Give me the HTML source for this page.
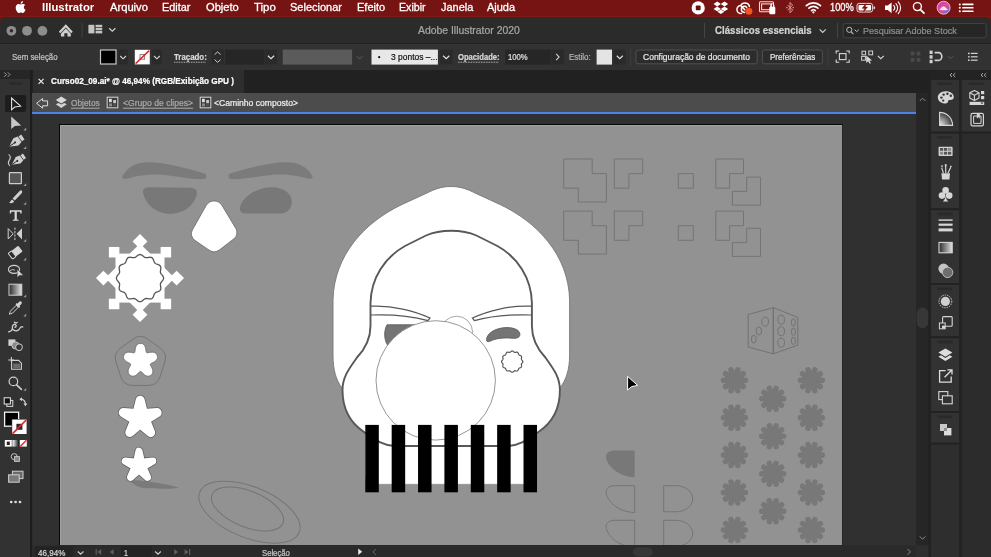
<!DOCTYPE html>
<html><head><meta charset="utf-8"><title>Adobe Illustrator 2020</title>
<style>
html,body{margin:0;padding:0;}
body{width:991px;height:557px;overflow:hidden;position:relative;background:#2b2b2b;font-family:"Liberation Sans",sans-serif;}
.a{position:absolute;}
.t{position:absolute;white-space:nowrap;line-height:1;transform-origin:0 100%;font-family:"Liberation Sans",sans-serif;}
svg{position:absolute;overflow:visible;}
#menubar{left:0;top:0;width:991px;height:17px;background:#761413;}
#menubar:after{content:"";position:absolute;left:0;top:16px;width:991px;height:1px;background:#7e1a14;}
#titlebar{left:0;top:17px;width:991px;height:26px;background:#2b2b2b;}
#ctrlbar{left:0;top:43px;width:991px;height:27px;background:#323232;border-top:1px solid #222;box-sizing:border-box;}
#tabrow{left:0;top:70px;width:991px;height:23px;background:#212121;}
#tab{left:33px;top:70px;width:211px;height:23px;background:#2e2e2e;}
#crumb{left:32.4px;top:92.8px;width:883.7px;height:19px;background:#4c4c4c;}
#blue{left:32.3px;top:111.8px;width:883.7px;height:2.3px;background:#4a82ee;}
#canvas{left:33px;top:114px;width:883px;height:432px;background:#303030;}
#artboard{left:59.3px;top:124px;width:784px;height:421.9px;background:#929292;border:1px solid #050505;border-right-color:#262626;border-bottom-color:#262626;box-sizing:border-box;box-shadow:inset 1px 1px 0 #a2a2a2;}
#tools{left:0;top:70px;width:30.4px;height:487px;background:#323232;}
#toolshead{left:0;top:70px;width:31px;height:9px;background:#262626;}
#toolsedge{left:30.2px;top:70px;width:2.2px;height:487px;background:#1d1d1d;}
#vscroll{left:916px;top:93px;width:14px;height:464px;background:#262626;}
#status{left:33px;top:546px;width:897px;height:11px;background:#2a2a2a;}
#dock{left:930px;top:70px;width:61px;height:487px;background:#1f1f1f;}
.dcol{background:#323232;}
.dsep{background:#262626;height:1px;}
.grip{background:#2a2a2a;height:3px;border-radius:1px;}

#texts{position:absolute;left:0;top:0;width:991px;height:557px;filter:grayscale(1);}

</style></head>
<body>
<div class="a" id="menubar"></div>
<div class="a" id="titlebar"></div>
<div class="a" id="ctrlbar"></div>
<div class="a" id="tabrow"></div>
<div class="a" id="tab"></div>
<div class="a" id="crumb"></div>
<div class="a" id="blue"></div>
<div class="a" id="canvas"></div>
<div class="a" id="artboard"></div>
<svg id="art" width="991" height="557" viewBox="0 0 991 557" style="left:0;top:0;">
<defs><clipPath id="abclip"><rect x="60" y="125" width="782.3" height="420"/></clipPath></defs>
<g clip-path="url(#abclip)">
<path d="M122.4,176.5 C126,168 136,162.3 148,162.3 C165,162.3 190,169 204.5,173.6 C207.2,174.6 207,178.6 204,179.1 C195,180 180,176.8 160,174.6 C145,173.6 133,177 126,178.8 C123.5,179.2 121.8,178 122.4,176.5 Z" fill="#7b7b7b"/>
<path d="M122.4,176.5 C126,168 136,162.3 148,162.3 C165,162.3 190,169 204.5,173.6 C207.2,174.6 207,178.6 204,179.1 C195,180 180,176.8 160,174.6 C145,173.6 133,177 126,178.8 C123.5,179.2 121.8,178 122.4,176.5 Z" fill="#7b7b7b" transform="translate(434.9,0) scale(-1,1)"/>
<path d="M143,192 C142.6,188.5 146,187.2 150,187.2 L190,187.8 C195,187.9 197.6,190 196.8,194 C195,204 185,213.8 170,213.8 C155,213.8 144,202 143,192 Z" fill="#787878"/>
<path d="M240,208 C241,198 256,187.2 272,187.2 C284,187.2 292,194 291.8,202 C291.5,210 286,213.6 280,213.6 L247,213.6 C242,213.6 239.6,212 240,208 Z" fill="#787878"/>
<path d="M206.06,205.65 A9.2,9.2 0 0 1 221.95,205.41 L235.81,228.38 A8,8 0 0 1 233.84,238.86 L219.59,249.81 A9,9 0 0 1 209,250.08 L194.87,240.35 A8,8 0 0 1 192.44,229.83 Z" fill="#fff" stroke="#6a6a6a" stroke-width="0.8"/>
<rect x="115.5" y="253.6" width="49" height="49" fill="#fff"/>
<rect x="115.5" y="253.6" width="49" height="49" fill="#fff" transform="rotate(45 140 278.1)"/>
<rect x="-5.25" y="-5.25" width="10.5" height="10.5" fill="#fff" transform="translate(176.6,278.1) rotate(45)"/>
<rect x="-5.25" y="-5.25" width="10.5" height="10.5" fill="#fff" transform="translate(165.88,303.98) rotate(90)"/>
<rect x="-5.25" y="-5.25" width="10.5" height="10.5" fill="#fff" transform="translate(140,314.7) rotate(135)"/>
<rect x="-5.25" y="-5.25" width="10.5" height="10.5" fill="#fff" transform="translate(114.12,303.98) rotate(180)"/>
<rect x="-5.25" y="-5.25" width="10.5" height="10.5" fill="#fff" transform="translate(103.4,278.1) rotate(225)"/>
<rect x="-5.25" y="-5.25" width="10.5" height="10.5" fill="#fff" transform="translate(114.12,252.22) rotate(270)"/>
<rect x="-5.25" y="-5.25" width="10.5" height="10.5" fill="#fff" transform="translate(140,241.5) rotate(315)"/>
<rect x="-5.25" y="-5.25" width="10.5" height="10.5" fill="#fff" transform="translate(165.88,252.22) rotate(360)"/>
<path d="M163.6,278.1 L163.53,278.72 L163.34,279.32 L163.03,279.91 L162.65,280.48 L162.21,281.02 L161.76,281.55 L161.33,282.05 L160.96,282.56 L160.67,283.06 L160.48,283.59 L160.38,284.14 L160.38,284.72 L160.45,285.34 L160.57,285.99 L160.69,286.67 L160.8,287.36 L160.85,288.05 L160.82,288.71 L160.69,289.33 L160.44,289.9 L160.07,290.4 L159.6,290.83 L159.04,291.19 L158.42,291.48 L157.77,291.74 L157.12,291.96 L156.5,292.19 L155.92,292.44 L155.42,292.73 L154.99,293.09 L154.63,293.52 L154.34,294.02 L154.09,294.6 L153.86,295.22 L153.64,295.87 L153.38,296.52 L153.09,297.14 L152.73,297.7 L152.3,298.17 L151.8,298.54 L151.23,298.79 L150.61,298.92 L149.95,298.95 L149.26,298.9 L148.57,298.79 L147.89,298.67 L147.24,298.55 L146.62,298.48 L146.04,298.48 L145.49,298.58 L144.96,298.77 L144.46,299.06 L143.95,299.43 L143.45,299.86 L142.92,300.31 L142.38,300.75 L141.81,301.13 L141.22,301.44 L140.62,301.63 L140,301.7 L139.38,301.63 L138.78,301.44 L138.19,301.13 L137.62,300.75 L137.08,300.31 L136.55,299.86 L136.05,299.43 L135.54,299.06 L135.04,298.77 L134.51,298.58 L133.96,298.48 L133.38,298.48 L132.76,298.55 L132.11,298.67 L131.43,298.79 L130.74,298.9 L130.05,298.95 L129.39,298.92 L128.77,298.79 L128.2,298.54 L127.7,298.17 L127.27,297.7 L126.91,297.14 L126.62,296.52 L126.36,295.87 L126.14,295.22 L125.91,294.6 L125.66,294.02 L125.37,293.52 L125.01,293.09 L124.58,292.73 L124.08,292.44 L123.5,292.19 L122.88,291.96 L122.23,291.74 L121.58,291.48 L120.96,291.19 L120.4,290.83 L119.93,290.4 L119.56,289.9 L119.31,289.33 L119.18,288.71 L119.15,288.05 L119.2,287.36 L119.31,286.67 L119.43,285.99 L119.55,285.34 L119.62,284.72 L119.62,284.14 L119.52,283.59 L119.33,283.06 L119.04,282.56 L118.67,282.05 L118.24,281.55 L117.79,281.02 L117.35,280.48 L116.97,279.91 L116.66,279.32 L116.47,278.72 L116.4,278.1 L116.47,277.48 L116.66,276.88 L116.97,276.29 L117.35,275.72 L117.79,275.18 L118.24,274.65 L118.67,274.15 L119.04,273.64 L119.33,273.14 L119.52,272.61 L119.62,272.06 L119.62,271.48 L119.55,270.86 L119.43,270.21 L119.31,269.53 L119.2,268.84 L119.15,268.15 L119.18,267.49 L119.31,266.87 L119.56,266.3 L119.93,265.8 L120.4,265.37 L120.96,265.01 L121.58,264.72 L122.23,264.46 L122.88,264.24 L123.5,264.01 L124.08,263.76 L124.58,263.47 L125.01,263.11 L125.37,262.68 L125.66,262.18 L125.91,261.6 L126.14,260.98 L126.36,260.33 L126.62,259.68 L126.91,259.06 L127.27,258.5 L127.7,258.03 L128.2,257.66 L128.77,257.41 L129.39,257.28 L130.05,257.25 L130.74,257.3 L131.43,257.41 L132.11,257.53 L132.76,257.65 L133.38,257.72 L133.96,257.72 L134.51,257.62 L135.04,257.43 L135.54,257.14 L136.05,256.77 L136.55,256.34 L137.08,255.89 L137.62,255.45 L138.19,255.07 L138.78,254.76 L139.38,254.57 L140,254.5 L140.62,254.57 L141.22,254.76 L141.81,255.07 L142.38,255.45 L142.92,255.89 L143.45,256.34 L143.95,256.77 L144.46,257.14 L144.96,257.43 L145.49,257.62 L146.04,257.72 L146.62,257.72 L147.24,257.65 L147.89,257.53 L148.57,257.41 L149.26,257.3 L149.95,257.25 L150.61,257.28 L151.23,257.41 L151.8,257.66 L152.3,258.03 L152.73,258.5 L153.09,259.06 L153.38,259.68 L153.64,260.33 L153.86,260.98 L154.09,261.6 L154.34,262.18 L154.63,262.68 L154.99,263.11 L155.42,263.47 L155.92,263.76 L156.5,264.01 L157.12,264.24 L157.77,264.46 L158.42,264.72 L159.04,265.01 L159.6,265.37 L160.07,265.8 L160.44,266.3 L160.69,266.87 L160.82,267.49 L160.85,268.15 L160.8,268.84 L160.69,269.53 L160.57,270.21 L160.45,270.86 L160.38,271.48 L160.38,272.06 L160.48,272.61 L160.67,273.14 L160.96,273.64 L161.33,274.15 L161.76,274.65 L162.21,275.18 L162.65,275.72 L163.03,276.29 L163.34,276.88 L163.53,277.48Z" fill="#fff" stroke="#555" stroke-width="1.3"/>
<path d="M133.12,338.99 Q140.4,333.7 147.68,338.99 L160.32,348.17 Q167.6,353.46 164.82,362.02 L159.99,376.88 Q157.21,385.44 148.21,385.44 L132.59,385.44 Q123.59,385.44 120.81,376.88 L115.98,362.02 Q113.2,353.46 120.48,348.17 Z" fill="none" stroke="#757575" stroke-width="1"/>
<polygon points="140.5,343.4 140.81,343.41 141.11,343.44 141.42,343.48 141.72,343.54 142.02,343.63 142.32,343.73 142.61,343.85 142.89,344 143.17,344.16 143.43,344.36 143.69,344.57 143.94,344.81 144.18,345.08 144.4,345.36 144.61,345.68 144.8,346.01 144.98,346.36 145.14,346.73 145.28,347.12 145.41,347.52 145.52,347.93 145.61,348.34 145.7,348.76 145.77,349.17 145.83,349.57 145.88,349.97 145.93,350.35 145.97,350.71 146.02,351.05 146.07,351.36 146.12,351.64 146.19,351.9 146.27,352.12 146.36,352.31 146.48,352.46 146.61,352.59 146.77,352.68 146.96,352.74 147.16,352.77 147.4,352.78 147.66,352.76 147.95,352.73 148.26,352.68 148.6,352.62 148.95,352.55 149.33,352.47 149.72,352.4 150.12,352.33 150.54,352.27 150.96,352.22 151.38,352.19 151.8,352.17 152.22,352.17 152.64,352.18 153.04,352.22 153.43,352.28 153.81,352.36 154.17,352.46 154.51,352.58 154.83,352.73 155.14,352.89 155.42,353.07 155.69,353.26 155.93,353.47 156.16,353.7 156.37,353.94 156.55,354.19 156.73,354.44 156.88,354.71 157.02,354.99 157.14,355.27 157.24,355.56 157.33,355.86 157.39,356.16 157.45,356.46 157.48,356.77 157.49,357.08 157.49,357.39 157.46,357.7 157.41,358.02 157.34,358.33 157.24,358.65 157.11,358.96 156.96,359.27 156.78,359.58 156.58,359.88 156.34,360.17 156.09,360.46 155.8,360.73 155.5,361 155.18,361.26 154.84,361.5 154.48,361.73 154.12,361.95 153.75,362.16 153.38,362.35 153.01,362.54 152.65,362.71 152.31,362.87 151.98,363.02 151.67,363.17 151.39,363.31 151.14,363.46 150.92,363.6 150.73,363.74 150.58,363.89 150.47,364.05 150.39,364.21 150.35,364.39 150.35,364.59 150.39,364.79 150.45,365.02 150.55,365.27 150.67,365.53 150.81,365.81 150.98,366.11 151.15,366.43 151.34,366.76 151.53,367.11 151.72,367.48 151.9,367.85 152.08,368.23 152.24,368.63 152.39,369.02 152.52,369.42 152.64,369.82 152.72,370.21 152.79,370.6 152.83,370.98 152.84,371.36 152.83,371.72 152.8,372.07 152.74,372.41 152.66,372.74 152.55,373.05 152.43,373.35 152.28,373.64 152.12,373.91 151.94,374.16 151.75,374.41 151.54,374.63 151.32,374.85 151.09,375.05 150.85,375.24 150.59,375.41 150.33,375.57 150.06,375.71 149.77,375.84 149.48,375.95 149.18,376.04 148.88,376.11 148.56,376.16 148.24,376.19 147.91,376.19 147.57,376.17 147.23,376.12 146.89,376.04 146.54,375.94 146.19,375.81 145.83,375.65 145.48,375.47 145.14,375.27 144.79,375.04 144.45,374.79 144.12,374.52 143.8,374.25 143.49,373.96 143.19,373.67 142.91,373.37 142.63,373.09 142.37,372.81 142.12,372.54 141.89,372.3 141.66,372.07 141.45,371.87 141.25,371.71 141.05,371.58 140.87,371.48 140.68,371.42 140.5,371.4 140.32,371.42 140.13,371.48 139.95,371.58 139.75,371.71 139.55,371.87 139.34,372.07 139.11,372.3 138.88,372.54 138.63,372.81 138.37,373.09 138.09,373.37 137.81,373.67 137.51,373.96 137.2,374.25 136.88,374.52 136.55,374.79 136.21,375.04 135.86,375.27 135.52,375.47 135.17,375.65 134.81,375.81 134.46,375.94 134.11,376.04 133.77,376.12 133.43,376.17 133.09,376.19 132.76,376.19 132.44,376.16 132.12,376.11 131.82,376.04 131.52,375.95 131.23,375.84 130.94,375.71 130.67,375.57 130.41,375.41 130.15,375.24 129.91,375.05 129.68,374.85 129.46,374.63 129.25,374.41 129.06,374.16 128.88,373.91 128.72,373.64 128.57,373.35 128.45,373.05 128.34,372.74 128.26,372.41 128.2,372.07 128.17,371.72 128.16,371.36 128.17,370.98 128.21,370.6 128.28,370.21 128.36,369.82 128.48,369.42 128.61,369.02 128.76,368.63 128.92,368.23 129.1,367.85 129.28,367.48 129.47,367.11 129.66,366.76 129.85,366.43 130.02,366.11 130.19,365.81 130.33,365.53 130.45,365.27 130.55,365.02 130.61,364.79 130.65,364.59 130.65,364.39 130.61,364.21 130.53,364.05 130.42,363.89 130.27,363.74 130.08,363.6 129.86,363.46 129.61,363.31 129.33,363.17 129.02,363.02 128.69,362.87 128.35,362.71 127.99,362.54 127.62,362.35 127.25,362.16 126.88,361.95 126.52,361.73 126.16,361.5 125.82,361.26 125.5,361 125.2,360.73 124.91,360.46 124.66,360.17 124.42,359.88 124.22,359.58 124.04,359.27 123.89,358.96 123.76,358.65 123.66,358.33 123.59,358.02 123.54,357.7 123.51,357.39 123.51,357.08 123.52,356.77 123.55,356.46 123.61,356.16 123.67,355.86 123.76,355.56 123.86,355.27 123.98,354.99 124.12,354.71 124.27,354.44 124.45,354.19 124.63,353.94 124.84,353.7 125.07,353.47 125.31,353.26 125.58,353.07 125.86,352.89 126.17,352.73 126.49,352.58 126.83,352.46 127.19,352.36 127.57,352.28 127.96,352.22 128.36,352.18 128.78,352.17 129.2,352.17 129.62,352.19 130.04,352.22 130.46,352.27 130.88,352.33 131.28,352.4 131.67,352.47 132.05,352.55 132.4,352.62 132.74,352.68 133.05,352.73 133.34,352.76 133.6,352.78 133.84,352.77 134.04,352.74 134.23,352.68 134.39,352.59 134.52,352.46 134.64,352.31 134.73,352.12 134.81,351.9 134.88,351.64 134.93,351.36 134.98,351.05 135.03,350.71 135.07,350.35 135.12,349.97 135.17,349.57 135.23,349.17 135.3,348.76 135.39,348.34 135.48,347.93 135.59,347.52 135.72,347.12 135.86,346.73 136.02,346.36 136.2,346.01 136.39,345.68 136.6,345.36 136.82,345.08 137.06,344.81 137.31,344.57 137.57,344.36 137.83,344.16 138.11,344 138.39,343.85 138.68,343.73 138.98,343.63 139.28,343.54 139.58,343.48 139.89,343.44 140.19,343.41" fill="#fff" stroke="#666" stroke-width="0.9"/>
<path d="M130,480.4 C142,479.6 165,484 179,487.6 C172,489.4 160,489 152,488 C146,489 140,487.6 136,485.4 C133,484 130.5,482 130,480.4Z" fill="#7a7a7a"/>
<polygon points="140.2,400.2 143.49,413.57 157.22,412.57 145.53,419.83 150.72,432.58 140.2,423.7 129.68,432.58 134.87,419.83 123.18,412.57 136.91,413.57" fill="#5e5e5e" stroke="#5e5e5e" stroke-width="10.5" stroke-linejoin="round"/>
<polygon points="140.2,400.2 143.49,413.57 157.22,412.57 145.53,419.83 150.72,432.58 140.2,423.7 129.68,432.58 134.87,419.83 123.18,412.57 136.91,413.57" fill="#fff" stroke="#fff" stroke-width="9" stroke-linejoin="round"/>
<polygon points="139,451.2 141.41,462.28 152.7,461.15 142.9,466.87 147.46,477.25 139,469.7 130.54,477.25 135.1,466.87 125.3,461.15 136.59,462.28" fill="#5e5e5e" stroke="#5e5e5e" stroke-width="8.7" stroke-linejoin="round"/>
<polygon points="139,451.2 141.41,462.28 152.7,461.15 142.9,466.87 147.46,477.25 139,469.7 130.54,477.25 135.1,466.87 125.3,461.15 136.59,462.28" fill="#fff" stroke="#fff" stroke-width="7.2" stroke-linejoin="round"/>
<ellipse cx="249.5" cy="512.2" rx="53.6" ry="25.5" transform="rotate(22 249.5 512.2)" fill="none" stroke="#757575" stroke-width="1"/>
<ellipse cx="247.5" cy="509" rx="38.2" ry="18" transform="rotate(22 247.5 509)" fill="none" stroke="#757575" stroke-width="1"/>
<path d="M451,186.5 C441,186.5 434,189.5 427,193 L402,204.5 C365,222 334,255 333,300 L333,355 C333,370 336,380 342,388 L560,388 C566,380 569.6,370 569.6,355 L569.6,300 C568.6,255 537,222 500,204.5 L475,193 C468,189.5 461,186.5 451,186.5 Z" fill="#fff" stroke="#777" stroke-width="0.9"/>
<rect x="365" y="400" width="172" height="84.3" rx="9" fill="#fff" stroke="#888" stroke-width="0.6"/>
<path d="M451.2,230.8 C441,230.8 434,232 426,235.5 L405,246 C385,257 371,278 370.5,303 L370.5,326 C370.5,340 365,349 357,357.5 C348,370 342.5,378 342.5,390 C342.5,410 352,424 364,432 C374,439 382,445.5 395,446 L507.4,446 C520.4,445.5 528.4,439 538.4,432 C550.4,424 559.9,410 559.9,390 C559.9,378 554.4,370 545.4,357.5 C537.4,349 531.9,340 531.9,326 L531.9,303 C531.4,278 517.4,257 497.4,246 L476.4,235.5 C468.4,232 461.4,230.8 451.2,230.8 Z" fill="#fff" stroke="#585858" stroke-width="1.9"/>
<path d="M371,306.2 C392,305 415,311 430,318 L428,320.6 C410,315.6 392,314.2 371,315" fill="none" stroke="#585858" stroke-width="1.25"/>
<path d="M371,306.2 C392,305 415,311 430,318 L428,320.6 C410,315.6 392,314.2 371,315" fill="none" stroke="#585858" stroke-width="1.25" transform="translate(902.4,0) scale(-1,1)"/>
<path d="M387,324.8 L416,324.8 L416,346 L388,346 C383.5,339 384,330.5 387,324.8 Z" fill="#747474" stroke="#5e5e5e" stroke-width="0.9"/>
<path d="M486.5,339.5 C487,333 496,327.6 507,327.6 C514,327.6 520,330 519.9,334.5 C519.8,338 516,338.6 512,338.2 C504,337.4 496,338.2 490,341.2 C487.5,342.2 486.3,341.5 486.5,339.5 Z" fill="#747474" stroke="#5e5e5e" stroke-width="0.9"/>
<circle cx="456.6" cy="332.2" r="16" fill="#fff" stroke="#909090" stroke-width="0.8"/>
<circle cx="435.7" cy="380.4" r="59.7" fill="#fff" stroke="#8a8a8a" stroke-width="0.9"/>
<path d="M522.85,361.6 L522.82,361.88 L522.73,362.15 L522.59,362.42 L522.41,362.67 L522.21,362.92 L522.01,363.15 L521.81,363.38 L521.64,363.61 L521.51,363.84 L521.42,364.07 L521.38,364.32 L521.38,364.58 L521.42,364.86 L521.47,365.16 L521.53,365.47 L521.58,365.78 L521.61,366.09 L521.6,366.39 L521.54,366.67 L521.42,366.93 L521.26,367.15 L521.04,367.34 L520.79,367.5 L520.51,367.64 L520.21,367.75 L519.92,367.85 L519.63,367.95 L519.38,368.06 L519.15,368.19 L518.95,368.35 L518.79,368.55 L518.66,368.78 L518.55,369.03 L518.45,369.32 L518.35,369.61 L518.24,369.91 L518.1,370.19 L517.94,370.44 L517.75,370.66 L517.53,370.82 L517.27,370.94 L516.99,371 L516.69,371.01 L516.38,370.98 L516.07,370.93 L515.76,370.87 L515.46,370.82 L515.18,370.78 L514.92,370.78 L514.67,370.82 L514.44,370.91 L514.21,371.04 L513.98,371.21 L513.75,371.41 L513.52,371.61 L513.27,371.81 L513.02,371.99 L512.75,372.13 L512.48,372.22 L512.2,372.25 L511.92,372.22 L511.65,372.13 L511.38,371.99 L511.13,371.81 L510.88,371.61 L510.65,371.41 L510.42,371.21 L510.19,371.04 L509.96,370.91 L509.73,370.82 L509.48,370.78 L509.22,370.78 L508.94,370.82 L508.64,370.87 L508.33,370.93 L508.02,370.98 L507.71,371.01 L507.41,371 L507.13,370.94 L506.88,370.82 L506.65,370.66 L506.46,370.44 L506.3,370.19 L506.16,369.91 L506.05,369.61 L505.95,369.32 L505.85,369.03 L505.74,368.78 L505.61,368.55 L505.45,368.35 L505.25,368.19 L505.02,368.06 L504.77,367.95 L504.48,367.85 L504.19,367.75 L503.89,367.64 L503.61,367.5 L503.36,367.34 L503.14,367.15 L502.98,366.93 L502.86,366.67 L502.8,366.39 L502.79,366.09 L502.82,365.78 L502.87,365.47 L502.93,365.16 L502.98,364.86 L503.02,364.58 L503.02,364.32 L502.98,364.07 L502.89,363.84 L502.76,363.61 L502.59,363.38 L502.39,363.15 L502.19,362.92 L501.99,362.67 L501.81,362.42 L501.67,362.15 L501.58,361.88 L501.55,361.6 L501.58,361.32 L501.67,361.05 L501.81,360.78 L501.99,360.53 L502.19,360.28 L502.39,360.05 L502.59,359.82 L502.76,359.59 L502.89,359.36 L502.98,359.13 L503.02,358.88 L503.02,358.62 L502.98,358.34 L502.93,358.04 L502.87,357.73 L502.82,357.42 L502.79,357.11 L502.8,356.81 L502.86,356.53 L502.98,356.28 L503.14,356.05 L503.36,355.86 L503.61,355.7 L503.89,355.56 L504.19,355.45 L504.48,355.35 L504.77,355.25 L505.02,355.14 L505.25,355.01 L505.45,354.85 L505.61,354.65 L505.74,354.42 L505.85,354.17 L505.95,353.88 L506.05,353.59 L506.16,353.29 L506.3,353.01 L506.46,352.76 L506.65,352.54 L506.88,352.38 L507.13,352.26 L507.41,352.2 L507.71,352.19 L508.02,352.22 L508.33,352.27 L508.64,352.33 L508.94,352.38 L509.22,352.42 L509.48,352.42 L509.73,352.38 L509.96,352.29 L510.19,352.16 L510.42,351.99 L510.65,351.79 L510.88,351.59 L511.13,351.39 L511.38,351.21 L511.65,351.07 L511.92,350.98 L512.2,350.95 L512.48,350.98 L512.75,351.07 L513.02,351.21 L513.27,351.39 L513.52,351.59 L513.75,351.79 L513.98,351.99 L514.21,352.16 L514.44,352.29 L514.67,352.38 L514.92,352.42 L515.18,352.42 L515.46,352.38 L515.76,352.33 L516.07,352.27 L516.38,352.22 L516.69,352.19 L516.99,352.2 L517.27,352.26 L517.53,352.38 L517.75,352.54 L517.94,352.76 L518.1,353.01 L518.24,353.29 L518.35,353.59 L518.45,353.88 L518.55,354.17 L518.66,354.42 L518.79,354.65 L518.95,354.85 L519.15,355.01 L519.38,355.14 L519.63,355.25 L519.92,355.35 L520.21,355.45 L520.51,355.56 L520.79,355.7 L521.04,355.86 L521.26,356.05 L521.42,356.28 L521.54,356.53 L521.6,356.81 L521.61,357.11 L521.58,357.42 L521.53,357.73 L521.47,358.04 L521.42,358.34 L521.38,358.62 L521.38,358.88 L521.42,359.13 L521.51,359.36 L521.64,359.59 L521.81,359.82 L522.01,360.05 L522.21,360.28 L522.41,360.53 L522.59,360.78 L522.73,361.05 L522.82,361.32Z" fill="#fff" stroke="#585858" stroke-width="1.2"/>
<rect x="365.3" y="424.9" width="13.5" height="67.4" fill="#000"/>
<rect x="391.67" y="424.9" width="13.5" height="67.4" fill="#000"/>
<rect x="418.04" y="424.9" width="13.5" height="67.4" fill="#000"/>
<rect x="444.41" y="424.9" width="13.5" height="67.4" fill="#000"/>
<rect x="470.78" y="424.9" width="13.5" height="67.4" fill="#000"/>
<rect x="497.15" y="424.9" width="13.5" height="67.4" fill="#000"/>
<rect x="523.52" y="424.9" width="13.5" height="67.4" fill="#000"/>
<polygon points="563.7,159 592.2,159 592.2,173.6 606.4,173.6 606.4,202 578.3,202 578.3,188.2 563.7,188.2" fill="none" stroke="#757575" stroke-width="1"/>
<polygon points="614.3,159 642.7,159 642.7,173.6 628.9,173.6 628.9,188.2 614.3,188.2" fill="none" stroke="#757575" stroke-width="1"/>
<polygon points="678.3,173.6 693.3,173.6 693.3,188.2 678.3,188.2" fill="none" stroke="#757575" stroke-width="1"/>
<polygon points="715.8,159 743.5,159 743.5,173.6 729.6,173.6 729.6,188.2 715.8,188.2" fill="none" stroke="#757575" stroke-width="1"/>
<polygon points="563.7,211.1 592.2,211.1 592.2,225.7 606.4,225.7 606.4,254.1 578.3,254.1 578.3,240.3 563.7,240.3" fill="none" stroke="#757575" stroke-width="1"/>
<polygon points="614.3,211.1 642.7,211.1 642.7,225.7 628.9,225.7 628.9,240.3 614.3,240.3" fill="none" stroke="#757575" stroke-width="1"/>
<polygon points="678.3,225.7 693.3,225.7 693.3,240.3 678.3,240.3" fill="none" stroke="#757575" stroke-width="1"/>
<polygon points="715.8,211.1 743.5,211.1 743.5,225.7 729.6,225.7 729.6,240.3 715.8,240.3" fill="none" stroke="#757575" stroke-width="1"/>
<polygon points="732.4,205.2 760.5,205.2 760.5,177.1 746.7,177.1 746.7,191.4 732.4,191.4" fill="none" stroke="#757575" stroke-width="1"/>
<polygon points="732.4,256.4 760.5,256.4 760.5,228.3 746.7,228.3 746.7,242.6 732.4,242.6" fill="none" stroke="#757575" stroke-width="1"/>
<g fill="none" stroke="#727272" stroke-width="1">
<polygon points="748.2,314.5 773.3,307.6 773.3,353.8 748.2,347.1"/>
<polygon points="773.3,307.6 797.8,317.4 797.8,345.2 773.3,353.8"/>
<ellipse cx="765.1" cy="321.6" rx="3.4" ry="4.5"/>
<ellipse cx="758.9" cy="331" rx="2.7" ry="4"/>
<ellipse cx="753.8" cy="339.2" rx="2.4" ry="3.9"/>
<ellipse cx="781.2" cy="319.7" rx="3.3" ry="4.5"/>
<ellipse cx="781.2" cy="331.2" rx="3.3" ry="4.5"/>
<ellipse cx="781.2" cy="342.7" rx="3.3" ry="4.5"/>
<ellipse cx="793.4" cy="322.4" rx="2" ry="3.7"/>
<ellipse cx="793.4" cy="331.7" rx="2" ry="3.7"/>
<ellipse cx="793.4" cy="340.8" rx="2" ry="3.7"/>
</g>
<path d="M734.4,380.2 L745.3,380.2 M734.4,380.2 L743.22,386.61 M734.4,380.2 L737.77,390.57 M734.4,380.2 L731.03,390.57 M734.4,380.2 L725.58,386.61 M734.4,380.2 L723.5,380.2 M734.4,380.2 L725.58,373.79 M734.4,380.2 L731.03,369.83 M734.4,380.2 L737.77,369.83 M734.4,380.2 L743.22,373.79 " stroke="#787878" stroke-width="5.6" stroke-linecap="round" fill="none"/>
<circle cx="734.4" cy="380.2" r="9.4" fill="#787878"/>
<path d="M811.4,380.2 L822.3,380.2 M811.4,380.2 L820.22,386.61 M811.4,380.2 L814.77,390.57 M811.4,380.2 L808.03,390.57 M811.4,380.2 L802.58,386.61 M811.4,380.2 L800.5,380.2 M811.4,380.2 L802.58,373.79 M811.4,380.2 L808.03,369.83 M811.4,380.2 L814.77,369.83 M811.4,380.2 L820.22,373.79 " stroke="#787878" stroke-width="5.6" stroke-linecap="round" fill="none"/>
<circle cx="811.4" cy="380.2" r="9.4" fill="#787878"/>
<path d="M734.4,417.65 L745.3,417.65 M734.4,417.65 L743.22,424.06 M734.4,417.65 L737.77,428.02 M734.4,417.65 L731.03,428.02 M734.4,417.65 L725.58,424.06 M734.4,417.65 L723.5,417.65 M734.4,417.65 L725.58,411.24 M734.4,417.65 L731.03,407.28 M734.4,417.65 L737.77,407.28 M734.4,417.65 L743.22,411.24 " stroke="#787878" stroke-width="5.6" stroke-linecap="round" fill="none"/>
<circle cx="734.4" cy="417.65" r="9.4" fill="#787878"/>
<path d="M811.4,417.65 L822.3,417.65 M811.4,417.65 L820.22,424.06 M811.4,417.65 L814.77,428.02 M811.4,417.65 L808.03,428.02 M811.4,417.65 L802.58,424.06 M811.4,417.65 L800.5,417.65 M811.4,417.65 L802.58,411.24 M811.4,417.65 L808.03,407.28 M811.4,417.65 L814.77,407.28 M811.4,417.65 L820.22,411.24 " stroke="#787878" stroke-width="5.6" stroke-linecap="round" fill="none"/>
<circle cx="811.4" cy="417.65" r="9.4" fill="#787878"/>
<path d="M734.4,455.1 L745.3,455.1 M734.4,455.1 L743.22,461.51 M734.4,455.1 L737.77,465.47 M734.4,455.1 L731.03,465.47 M734.4,455.1 L725.58,461.51 M734.4,455.1 L723.5,455.1 M734.4,455.1 L725.58,448.69 M734.4,455.1 L731.03,444.73 M734.4,455.1 L737.77,444.73 M734.4,455.1 L743.22,448.69 " stroke="#787878" stroke-width="5.6" stroke-linecap="round" fill="none"/>
<circle cx="734.4" cy="455.1" r="9.4" fill="#787878"/>
<path d="M811.4,455.1 L822.3,455.1 M811.4,455.1 L820.22,461.51 M811.4,455.1 L814.77,465.47 M811.4,455.1 L808.03,465.47 M811.4,455.1 L802.58,461.51 M811.4,455.1 L800.5,455.1 M811.4,455.1 L802.58,448.69 M811.4,455.1 L808.03,444.73 M811.4,455.1 L814.77,444.73 M811.4,455.1 L820.22,448.69 " stroke="#787878" stroke-width="5.6" stroke-linecap="round" fill="none"/>
<circle cx="811.4" cy="455.1" r="9.4" fill="#787878"/>
<path d="M734.4,492.55 L745.3,492.55 M734.4,492.55 L743.22,498.96 M734.4,492.55 L737.77,502.92 M734.4,492.55 L731.03,502.92 M734.4,492.55 L725.58,498.96 M734.4,492.55 L723.5,492.55 M734.4,492.55 L725.58,486.14 M734.4,492.55 L731.03,482.18 M734.4,492.55 L737.77,482.18 M734.4,492.55 L743.22,486.14 " stroke="#787878" stroke-width="5.6" stroke-linecap="round" fill="none"/>
<circle cx="734.4" cy="492.55" r="9.4" fill="#787878"/>
<path d="M811.4,492.55 L822.3,492.55 M811.4,492.55 L820.22,498.96 M811.4,492.55 L814.77,502.92 M811.4,492.55 L808.03,502.92 M811.4,492.55 L802.58,498.96 M811.4,492.55 L800.5,492.55 M811.4,492.55 L802.58,486.14 M811.4,492.55 L808.03,482.18 M811.4,492.55 L814.77,482.18 M811.4,492.55 L820.22,486.14 " stroke="#787878" stroke-width="5.6" stroke-linecap="round" fill="none"/>
<circle cx="811.4" cy="492.55" r="9.4" fill="#787878"/>
<path d="M734.4,530 L745.3,530 M734.4,530 L743.22,536.41 M734.4,530 L737.77,540.37 M734.4,530 L731.03,540.37 M734.4,530 L725.58,536.41 M734.4,530 L723.5,530 M734.4,530 L725.58,523.59 M734.4,530 L731.03,519.63 M734.4,530 L737.77,519.63 M734.4,530 L743.22,523.59 " stroke="#787878" stroke-width="5.6" stroke-linecap="round" fill="none"/>
<circle cx="734.4" cy="530" r="9.4" fill="#787878"/>
<path d="M811.4,530 L822.3,530 M811.4,530 L820.22,536.41 M811.4,530 L814.77,540.37 M811.4,530 L808.03,540.37 M811.4,530 L802.58,536.41 M811.4,530 L800.5,530 M811.4,530 L802.58,523.59 M811.4,530 L808.03,519.63 M811.4,530 L814.77,519.63 M811.4,530 L820.22,523.59 " stroke="#787878" stroke-width="5.6" stroke-linecap="round" fill="none"/>
<circle cx="811.4" cy="530" r="9.4" fill="#787878"/>
<path d="M772.7,398.8 L783.6,398.8 M772.7,398.8 L781.52,405.21 M772.7,398.8 L776.07,409.17 M772.7,398.8 L769.33,409.17 M772.7,398.8 L763.88,405.21 M772.7,398.8 L761.8,398.8 M772.7,398.8 L763.88,392.39 M772.7,398.8 L769.33,388.43 M772.7,398.8 L776.07,388.43 M772.7,398.8 L781.52,392.39 " stroke="#787878" stroke-width="5.6" stroke-linecap="round" fill="none"/>
<circle cx="772.7" cy="398.8" r="9.4" fill="#787878"/>
<path d="M772.7,436.25 L783.6,436.25 M772.7,436.25 L781.52,442.66 M772.7,436.25 L776.07,446.62 M772.7,436.25 L769.33,446.62 M772.7,436.25 L763.88,442.66 M772.7,436.25 L761.8,436.25 M772.7,436.25 L763.88,429.84 M772.7,436.25 L769.33,425.88 M772.7,436.25 L776.07,425.88 M772.7,436.25 L781.52,429.84 " stroke="#787878" stroke-width="5.6" stroke-linecap="round" fill="none"/>
<circle cx="772.7" cy="436.25" r="9.4" fill="#787878"/>
<path d="M772.7,473.7 L783.6,473.7 M772.7,473.7 L781.52,480.11 M772.7,473.7 L776.07,484.07 M772.7,473.7 L769.33,484.07 M772.7,473.7 L763.88,480.11 M772.7,473.7 L761.8,473.7 M772.7,473.7 L763.88,467.29 M772.7,473.7 L769.33,463.33 M772.7,473.7 L776.07,463.33 M772.7,473.7 L781.52,467.29 " stroke="#787878" stroke-width="5.6" stroke-linecap="round" fill="none"/>
<circle cx="772.7" cy="473.7" r="9.4" fill="#787878"/>
<path d="M772.7,511.15 L783.6,511.15 M772.7,511.15 L781.52,517.56 M772.7,511.15 L776.07,521.52 M772.7,511.15 L769.33,521.52 M772.7,511.15 L763.88,517.56 M772.7,511.15 L761.8,511.15 M772.7,511.15 L763.88,504.74 M772.7,511.15 L769.33,500.78 M772.7,511.15 L776.07,500.78 M772.7,511.15 L781.52,504.74 " stroke="#787878" stroke-width="5.6" stroke-linecap="round" fill="none"/>
<circle cx="772.7" cy="511.15" r="9.4" fill="#787878"/>
<path d="M634.7,450.4 L615,450.4 C609,450.4 606,453 606,457 C607,466 619,477 634.7,477.2 Z" fill="#787878"/>
<path d="M634.7,450.4 L615,450.4 C609,450.4 606,453 606,457 C607,466 619,477 634.7,477.2 Z" fill="none" stroke="#757575" stroke-width="1" transform="translate(0,35.3)"/>
<path d="M634.7,450.4 L615,450.4 C609,450.4 606,453 606,457 C607,466 619,477 634.7,477.2 Z" fill="none" stroke="#757575" stroke-width="1" transform="translate(0,69.9)"/>
<path d="M663.7,485.7 L676,485.7 C685,485.7 692.7,491.5 692.7,499 C692.7,506 685,511.8 676,511.8 L663.7,511.8 Z" fill="none" stroke="#757575" stroke-width="1"/>
<path d="M663.7,485.7 L676,485.7 C685,485.7 692.7,491.5 692.7,499 C692.7,506 685,511.8 676,511.8 L663.7,511.8 Z" fill="none" stroke="#757575" stroke-width="1" transform="translate(0,34.6)"/>
</g>
<path d="M627.6,376.4 L627.6,390 L631.6,386.6 L637.6,385.4 Z" fill="#000" stroke="#fff" stroke-width="1" stroke-linejoin="round"/>
</svg>
<div class="a" id="tools"></div>
<div class="a" id="toolshead"></div>
<div class="a" id="toolsedge"></div>
<div class="a" id="vscroll"></div>
<div class="a" id="status"></div>
<div class="a" id="dock"></div>
<svg id="menuicons" width="991" height="17" viewBox="0 0 991 17" style="left:0;top:0;">
<!-- apple -->
<g transform="translate(14.6,1) scale(0.5)" fill="#fff"><path d="M12.152 6.896c-.948 0-2.415-1.078-3.96-1.04-2.04.027-3.91 1.183-4.961 3.014-2.117 3.675-.546 9.103 1.519 12.09 1.013 1.454 2.208 3.09 3.792 3.039 1.52-.065 2.09-.987 3.935-.987 1.831 0 2.35.987 3.96.948 1.637-.026 2.676-1.48 3.676-2.948 1.156-1.688 1.636-3.325 1.662-3.415-.039-.013-3.182-1.221-3.22-4.857-.026-3.04 2.48-4.494 2.597-4.559-1.429-2.09-3.623-2.324-4.39-2.376-2-.156-3.675 1.09-4.61 1.09zM15.53 3.83c.843-1.012 1.4-2.427 1.245-3.83-1.207.052-2.662.805-3.532 1.818-.78.896-1.454 2.338-1.273 3.714 1.338.104 2.715-.688 3.559-1.701"/></g>
<!-- record -->
<circle cx="698.2" cy="7.9" r="6.6" fill="#fff"/><rect x="695.8" y="5.5" width="4.8" height="4.8" rx="0.8" fill="#6a1010"/>
<!-- dropbox -->
<g fill="#fff">
<polygon points="717.2,1.6 720.9,4 717.2,6.4 713.5,4"/><polygon points="724.5,1.6 728.2,4 724.5,6.4 720.8,4"/>
<polygon points="717.2,6.5 720.9,8.9 717.2,11.3 713.5,8.9"/><polygon points="724.5,6.5 728.2,8.9 724.5,11.3 720.8,8.9"/>
<polygon points="720.85,9.6 724.3,11.8 720.85,14 717.4,11.8"/>
</g>
<!-- creative cloud -->
<g fill="none" stroke="#fff" stroke-width="1.5" stroke-linecap="round">
<path d="M741.5,13.6 C738.6,13.6 736.9,11.6 736.9,9.5 C736.9,7.3 738.6,5.6 740.7,5.6 C741.4,3.9 743,2.9 744.9,2.9 C747.3,2.9 749,4.4 749.4,6.4"/>
<path d="M744.6,12.4 C742.6,12.4 741.4,11 741.4,9.3 C741.4,7.6 742.7,6.3 744.4,6.3 C745.4,6.3 746.2,6.8 746.7,7.4"/>
<path d="M741,5.8 L744.8,9.8"/>
</g>
<circle cx="748.9" cy="11.3" r="3.5" fill="#f4541e"/>
<!-- screen / lock -->
<g fill="none" stroke="#f0dada" stroke-width="1.1">
<rect x="759.5" y="1.8" width="14" height="10" rx="1"/>
<rect x="761.6" y="3.9" width="9.8" height="5.8"/>
</g>
<rect x="769.3" y="6.8" width="6" height="7.4" rx="1.2" fill="#fff"/>
<path d="M770.7,7 V5.4 a1.6,1.6 0 0 1 3.2,0 V7" fill="none" stroke="#fff" stroke-width="1"/>
<!-- bluetooth (dim) -->
<g fill="none" stroke="#d49a98" stroke-width="1" stroke-linejoin="round">
<path d="M787.6,5 L792.6,10 L790,12.8 L790,2.4 L792.6,5.2 L787.6,10.2"/>
<path d="M786.2,7.6 h1.4 M792.6,7.6 h1.4" stroke-width="1.3"/>
</g>
<!-- wifi -->
<g fill="none" stroke="#fff" stroke-width="1.7" stroke-linecap="round">
<path d="M806.3,5.6 A10.4,10.4 0 0 1 820.5,5.6"/>
<path d="M808.9,8.2 A6.6,6.6 0 0 1 817.9,8.2"/>
<path d="M811.4,10.6 A3,3 0 0 1 815.4,10.6" stroke-width="1.5"/>
</g>
<circle cx="813.4" cy="12.3" r="1.1" fill="#fff"/>
<!-- battery -->
<rect x="857" y="3.4" width="15.6" height="8.6" rx="2.2" fill="none" stroke="#f1dede" stroke-width="1"/>
<rect x="858.5" y="4.9" width="12.6" height="5.6" rx="1" fill="#fff"/>
<path d="M873.6,6.2 v3 c1,0 1.6,-0.7 1.6,-1.5 c0,-0.8 -0.6,-1.5 -1.6,-1.5z" fill="#f1dede"/>
<path d="M866,3.6 L862.2,8.3 L864.6,8.3 L863.6,11.8 L867.4,7.1 L865,7.1 Z" fill="#761413" stroke="#761413" stroke-width="0.6"/>
<!-- volume -->
<path d="M885,5.6 h2.8 l3.8,-3.2 v10.8 l-3.8,-3.2 h-2.8 z" fill="#fff"/>
<g fill="none" stroke="#fff" stroke-width="1.1" stroke-linecap="round">
<path d="M893.6,5.4 a3.4,3.4 0 0 1 0,4.8"/><path d="M895.9,3.6 a6,6 0 0 1 0,8.4"/><path d="M898.2,1.9 a8.6,8.6 0 0 1 0,11.8"/>
</g>
<!-- search -->
<circle cx="917.4" cy="6.6" r="4" fill="none" stroke="#fff" stroke-width="1.4"/>
<path d="M920.4,9.6 L924,13.2" stroke="#fff" stroke-width="1.7" stroke-linecap="round"/>
<!-- siri -->
<defs><linearGradient id="siri" x1="0" y1="0" x2="1" y2="1"><stop offset="0" stop-color="#c23bd8"/><stop offset="0.5" stop-color="#e84a8a"/><stop offset="1" stop-color="#3b7df0"/></linearGradient></defs>
<circle cx="943.6" cy="7.7" r="6.5" fill="url(#siri)" stroke="#f3d7ea" stroke-width="0.8"/>
<path d="M939.3,9.6 C941,8.6 942,6.2 943.6,6.2 C945.2,6.2 946.4,8.8 948,9.6 C946.4,10.6 941,10.6 939.3,9.6z" fill="#fff" opacity="0.9"/>
<!-- list -->
<g fill="#fff"><circle cx="959.8" cy="4.4" r="1"/><circle cx="959.8" cy="7.8" r="1"/><circle cx="959.8" cy="11.2" r="1"/>
<rect x="962.2" y="3.6" width="11.4" height="1.6" rx="0.6"/><rect x="962.2" y="7" width="11.4" height="1.6" rx="0.6"/><rect x="962.2" y="10.4" width="11.4" height="1.6" rx="0.6"/></g>
</svg>

<svg id="bars" width="991" height="100" viewBox="0 0 991 100" style="left:0;top:0;">
<!-- window corner -->
<path d="M0,17 h6 a6,6 0 0 0 -6,6z" fill="#761413"/>
<path d="M991,17 h-6 a6,6 0 0 1 6,6z" fill="#761413"/>
<!-- traffic lights -->
<circle cx="11.4" cy="30.8" r="4.9" fill="#8d8d8d"/><circle cx="11.4" cy="30.8" r="1.7" fill="#2c2c2c"/>
<circle cx="27" cy="30.8" r="4.9" fill="#8d8d8d"/><circle cx="42.4" cy="30.9" r="4.9" fill="#8d8d8d"/>
<!-- home -->
<path d="M65.8,24.2 L58.8,31.8 L60.4,33.2 L65.8,27.4 L71.2,33.2 L72.8,31.8 Z" fill="#cfcfcf"/>
<path d="M60.9,33.8 L65.8,28.6 L70.8,33.8 L70.8,36.4 L67.5,36.4 L67.5,33.2 L64.3,33.2 L64.3,36.4 L60.9,36.4 Z" fill="#cfcfcf"/>
<rect x="81.6" y="23" width="1" height="15" fill="#454545"/>
<!-- workspace switcher -->
<g fill="#c4c4c4"><rect x="88.4" y="24.8" width="6" height="8.6"/><rect x="95.6" y="24.8" width="6.6" height="2.4"/><rect x="95.6" y="27.9" width="6.6" height="2.4"/><rect x="95.6" y="31" width="6.6" height="2.4"/></g>
<path d="M109.2,28.2 l3.1,3 l3.1,-3" fill="none" stroke="#cfcfcf" stroke-width="1.2"/>
<rect x="704" y="23" width="1" height="15" fill="#454545"/>
<path d="M819.6,29.4 l3.1,3 l3.1,-3" fill="none" stroke="#cfcfcf" stroke-width="1.2"/>
<rect x="837" y="23" width="1" height="15" fill="#454545"/>
<!-- search field -->
<rect x="843.2" y="23.6" width="143" height="14.2" rx="2" fill="#262626" stroke="#444" stroke-width="1"/>
<circle cx="849.3" cy="29.8" r="2.6" fill="none" stroke="#bdbdbd" stroke-width="1"/><path d="M851.2,31.8 l2.2,2.3" stroke="#bdbdbd" stroke-width="1.1"/>
<path d="M854.6,29.6 l2.1,2.1 l2.1,-2.1" fill="none" stroke="#bdbdbd" stroke-width="1"/>

<!-- control bar widgets -->
<g>
<rect x="100.5" y="50" width="15.5" height="14" fill="#000" stroke="#c6c6c6" stroke-width="1.2"/>
<rect x="118.4" y="49.6" width="9.4" height="15" rx="1" fill="#2a2a2a"/>
<path d="M120.2,56 l2.9,2.8 l2.9,-2.8" fill="none" stroke="#d6d6d6" stroke-width="1.1"/>
<rect x="134.8" y="49.8" width="15" height="14.6" fill="#fff"/>
<rect x="140" y="54.6" width="4.6" height="4.6" fill="none" stroke="#777" stroke-width="0.9"/>
<path d="M135.6,63.6 L149.2,50.6" stroke="#e3262b" stroke-width="1.5"/>
<rect x="152.2" y="49.6" width="9.4" height="15" rx="1" fill="#2a2a2a"/>
<path d="M154,56 l2.9,2.8 l2.9,-2.8" fill="none" stroke="#d6d6d6" stroke-width="1.1"/>
<!-- stroke weight -->
<rect x="211.4" y="49.6" width="12.6" height="15" rx="1.5" fill="#2a2a2a"/>
<path d="M214.6,54.6 l3,-2.7 l3,2.7 M214.6,59.6 l3,2.7 l3,-2.7" fill="none" stroke="#cfcfcf" stroke-width="1"/>
<rect x="225.2" y="49.6" width="39.2" height="15" fill="#262626"/>
<rect x="265" y="49.6" width="12.2" height="15" rx="1" fill="#2a2a2a"/>
<path d="M267.9,55.8 l3.1,2.9 l3.1,-2.9" fill="none" stroke="#e0e0e0" stroke-width="1.2"/>
<rect x="282.7" y="49.6" width="69.4" height="15" fill="#5b5b5b"/>
<path d="M356.6,56 l3,2.8 l3,-2.8" fill="none" stroke="#4e4e4e" stroke-width="1.1"/>
<rect x="371.5" y="49.6" width="66.4" height="15" fill="#e8e8e8"/>
<circle cx="379.2" cy="57.2" r="1.1" fill="#111"/>
<rect x="440" y="49.6" width="12.6" height="15" rx="1" fill="#2a2a2a"/>
<path d="M443.1,55.8 l3.1,2.9 l3.1,-2.9" fill="none" stroke="#e0e0e0" stroke-width="1.2"/>
<!-- opacity -->
<rect x="505.2" y="49.6" width="45.4" height="15" fill="#262626"/>
<rect x="551.4" y="49.6" width="12.4" height="15" rx="1" fill="#2a2a2a"/>
<path d="M556.2,53.9 l2.9,3.1 l-2.9,3.1" fill="none" stroke="#d0d0d0" stroke-width="1.1"/>
<!-- style -->
<rect x="596.6" y="49.6" width="15.4" height="15" fill="#e4e4e4"/>
<rect x="613.8" y="49.6" width="11.8" height="15" rx="1" fill="#2a2a2a"/>
<path d="M616.8,55.8 l3,2.9 l3,-2.9" fill="none" stroke="#e0e0e0" stroke-width="1.2"/>
<rect x="630.2" y="48" width="1" height="18" fill="#3e3e3e"/>
<rect x="636" y="50" width="121.2" height="13.8" rx="2" fill="#2c2c2c" stroke="#505050" stroke-width="1"/>
<rect x="762.4" y="50" width="60" height="13.8" rx="2" fill="#2c2c2c" stroke="#505050" stroke-width="1"/>
<rect x="827.6" y="48" width="1" height="18" fill="#3e3e3e"/>
</g>
<!-- right control bar icons -->
<g fill="none" stroke="#d8d8d8" stroke-width="1.1">
<rect x="839.4" y="53.6" width="6.6" height="6"/>
<path d="M836.2,53.6 v-2.6 h3 M849.2,53.6 v-2.6 h-3 M836.2,59.6 v2.6 h3 M849.2,59.6 v2.6 h-3"/>
</g>
<g fill="none" stroke="#cfcfcf" stroke-width="1">
<rect x="862" y="51.2" width="3.6" height="3.6"/><rect x="868.8" y="51" width="3.8" height="3.8"/><rect x="861.6" y="56.4" width="3.8" height="3.8"/>
</g>
<path d="M866.2,55.4 L866.2,63 L868.2,61.2 L869.6,63.8 L870.8,63.2 L869.6,60.6 L872.2,60.4 Z" fill="#d8d8d8"/>
<path d="M877.8,55.8 l3,2.9 l3,-2.9" fill="none" stroke="#d6d6d6" stroke-width="1.1"/>
<g fill="#4a4a4a"><rect x="910.6" y="51.6" width="3.8" height="3.8"/><rect x="916.6" y="51.6" width="3.8" height="3.8"/><rect x="910.6" y="58" width="3.8" height="3.8"/><rect x="916.6" y="58" width="3.8" height="3.8"/></g>
<g fill="#d0d0d0"><rect x="929.6" y="50.6" width="3" height="3.4"/><rect x="929.6" y="55.2" width="3" height="3.4"/><rect x="929.6" y="59.8" width="3" height="3.4"/></g>
<path d="M934.6,52.6 h4 a3.2,3.9 0 0 1 0,7.8 h-4" fill="none" stroke="#d0d0d0" stroke-width="1.6"/>
<path d="M947.6,55.8 l2.9,2.8 l2.9,-2.8" fill="none" stroke="#4e4e4e" stroke-width="1.1"/>
<g fill="#d0d0d0"><circle cx="968.8" cy="53.4" r="0.9"/><circle cx="968.8" cy="56.8" r="0.9"/><circle cx="968.8" cy="60.2" r="0.9"/>
<rect x="970.8" y="52.8" width="6.8" height="1.2"/><rect x="970.8" y="56.2" width="6.8" height="1.2"/><rect x="970.8" y="59.6" width="6.8" height="1.2"/></g>
<!-- tab row -->
<path d="M4.2,72.4 l2.2,2.2 l-2.2,2.2 M7.8,72.4 l2.2,2.2 l-2.2,2.2" fill="none" stroke="#a8a8a8" stroke-width="0.9"/>
<path d="M38.6,78.8 l5,5 M43.6,78.8 l-5,5" stroke="#e8e8e8" stroke-width="1.2"/>
</svg>

<svg id="crumbsvg" width="991" height="24" viewBox="0 92 991 24" style="left:0;top:92px;">
<path d="M36.6,103.3 L42.6,98.5 L42.6,100.9 L47.6,100.9 L47.6,105.8 L42.6,105.8 L42.6,108.2 Z" fill="none" stroke="#dedede" stroke-width="1"/>
<path d="M55.8,104.2 L58.4,102.9 L61.3,104.6 L64.2,102.9 L66.8,104.2 L61.3,107.9 Z" fill="#d2d2d2"/>
<path d="M61.3,96.4 L66.8,100 L61.3,103.6 L55.8,100 Z" fill="#d8d8d8"/>
<g id="clipico">
<rect x="107.2" y="97.2" width="10.6" height="10.6" fill="#3a3a3a" stroke="#d6d6d6" stroke-width="1"/>
<rect x="109" y="98.8" width="2.8" height="3.4" fill="#e0e0e0"/>
<rect x="113.2" y="100" width="2.8" height="3.2" fill="#c8c8c8"/>
<rect x="109" y="103.4" width="3" height="3" fill="#8a8a8a"/>
<rect x="113.2" y="104.2" width="2.8" height="2.2" fill="#555"/>
</g>
<use href="#clipico" x="93" y="0"/>
</svg>

<svg id="toolsvg" width="34" height="557" viewBox="0 0 34 557" style="left:0;top:0;">
<defs>
<linearGradient id="gradtool" x1="0" y1="0" x2="1" y2="0"><stop offset="0" stop-color="#2a2a2a"/><stop offset="1" stop-color="#e6e6e6"/></linearGradient>
<linearGradient id="gradmini" x1="0" y1="0" x2="1" y2="0"><stop offset="0" stop-color="#fff"/><stop offset="1" stop-color="#111"/></linearGradient>
<g id="pen">
 <rect x="-2.7" y="-8.4" width="5.4" height="2.9" fill="#d0d0d0"/>
 <path d="M-3,-4.8 L3,-4.8 L4.1,-0.6 L0,7.2 L-4.1,-0.6 Z" fill="#cfcfcf"/>
 <path d="M0,7.2 L0,1" stroke="#2e2e2e" stroke-width="0.9"/><circle cx="0" cy="0.4" r="1" fill="#2e2e2e"/>
</g>
<path id="corner" d="M0,2.8 L2.8,2.8 L2.8,0 Z" fill="#9a9a9a"/>
</defs>
<rect x="9" y="82.2" width="13" height="2.6" rx="1" fill="#2a2a2a"/>
<!-- selection (active) -->
<rect x="5" y="95" width="21.2" height="17" rx="2" fill="#1d1d1d"/>
<path d="M11.6,98 L11.6,109.8 L14.7,107 L20.6,106.2 Z" fill="none" stroke="#e2e2e2" stroke-width="1.1" stroke-linejoin="miter"/>
<!-- direct selection -->
<path d="M11.2,116.6 L11.2,129 L14.8,126 L21.2,125.4 Z" fill="#c9c9c9"/>
<use href="#corner" x="23.4" y="127.6"/>
<!-- pen -->
<use href="#pen" transform="translate(15.4,142.2) rotate(55) scale(1.08)"/>
<use href="#corner" x="23.4" y="146.2"/>
<!-- curvature -->
<use href="#pen" transform="translate(17.6,160.6) rotate(55) scale(1.0)"/>
<path d="M8.6,154.4 C10.8,156 10.4,158.6 9.2,160.4 C8,162.4 8.4,164.6 10,165.8" fill="none" stroke="#cfcfcf" stroke-width="1.1"/>
<!-- rectangle -->
<rect x="9.4" y="172.6" width="12" height="11" rx="0.6" fill="#555" stroke="#cdcdcd" stroke-width="1.2"/>
<use href="#corner" x="23.4" y="183.2"/>
<!-- brush -->
<path d="M21.6,190.4 C22.6,191.2 22.2,192.4 21.4,193.4 L14.8,200.6 L12.6,198.6 L19.4,191.2 C20.2,190.4 21,190 21.6,190.4 Z" fill="#d0d0d0"/>
<path d="M12,199.4 L14,201.2 C13.6,203 11.4,203.4 9,203 C10.4,202 10.6,200.2 12,199.4 Z" fill="#d0d0d0"/>
<use href="#corner" x="23.4" y="202"/>
<!-- type -->
<path d="M9.8,210.2 H21.6 V213.6 H20.4 L20,211.8 H16.8 V219.4 L18.6,219.8 V220.8 H12.8 V219.8 L14.6,219.4 V211.8 H11.4 L11,213.6 H9.8 Z" fill="#dadada"/>
<use href="#corner" x="23.4" y="220.6"/>
<!-- reflect -->
<path d="M8.2,228.6 L13.2,233.8 L8.2,239 Z" fill="none" stroke="#d0d0d0" stroke-width="1"/>
<path d="M22,228.2 L16.6,233.8 L22,239.4 Z" fill="#d0d0d0"/>
<path d="M14.9,227.6 V240" stroke="#d0d0d0" stroke-width="1" stroke-dasharray="2.2 1.2"/>
<use href="#corner" x="23.4" y="239"/>
<!-- eraser -->
<g transform="translate(15.4,252.4) rotate(-38)">
<rect x="-6.4" y="-3.6" width="12.8" height="7.2" rx="1" fill="#d4d4d4"/>
<rect x="-6.4" y="-3.6" width="4.4" height="7.2" rx="1" fill="#2b2b2b" stroke="#d4d4d4" stroke-width="1"/>
</g>
<use href="#corner" x="23.4" y="257.6"/>
<!-- shape builder -->
<ellipse cx="14" cy="269.4" rx="5.6" ry="4" fill="none" stroke="#d0d0d0" stroke-width="1.1"/>
<path d="M9.6,270.8 C11.8,269.4 13.8,269.4 15,270.4" fill="none" stroke="#d0d0d0" stroke-width="0.9"/>
<path d="M17.2,269.2 L17.2,277.4 L19.4,275.4 L23.4,275.2 Z" fill="#d8d8d8" stroke="#323232" stroke-width="0.5"/>
<!-- gradient -->
<rect x="9" y="284.2" width="12.8" height="11" fill="url(#gradtool)" stroke="#cfcfcf" stroke-width="1"/>
<use href="#corner" x="23.4" y="294.4"/>
<!-- eyedropper -->
<path d="M9.4,314.2 L10.4,311.2 L16.4,305.2 L18.4,307.2 L12.4,313.2 Z" fill="none" stroke="#d2d2d2" stroke-width="1"/>
<path d="M15.6,304.6 L19,308 L20.2,306.8 L19.4,306 L21.2,304.2 C22,303.4 22,302.4 21.4,301.8 C20.8,301.2 19.8,301.2 19,302 L17.2,303.8 L16.4,303 Z" fill="#d2d2d2"/>
<use href="#corner" x="23.4" y="313.6"/>
<!-- symbol / puppet -->
<path d="M8.6,331.8 C11.4,331.4 12.6,329.6 12.4,327.4 C12.2,325.4 13.6,323.8 15.4,324.6 C17,325.4 16,327.4 14.8,327.2 M13,329.4 C15.4,331.6 18.6,331 19.6,328.8 C20.4,327 21.6,326.4 22.8,327 M14.4,322.2 C15.2,323 16.4,323 17.2,322.4" fill="none" stroke="#d0d0d0" stroke-width="1.3" stroke-linecap="round"/>
<!-- blend -->
<rect x="8.4" y="339.4" width="7" height="6.4" fill="#cfcfcf"/>
<circle cx="15.4" cy="345.4" r="3.6" fill="#8a8a8a" stroke="#cfcfcf" stroke-width="0.8"/>
<circle cx="19" cy="347.2" r="3.4" fill="#323232" stroke="#cfcfcf" stroke-width="1"/>
<!-- artboard -->
<path d="M11.4,357 V362 M8.2,360 H14" stroke="#d0d0d0" stroke-width="1.1" fill="none"/>
<path d="M11.6,360.4 H18.6 L21.4,363.2 V369.2 H11.6 Z" fill="none" stroke="#d0d0d0" stroke-width="1.1"/>
<rect x="13.2" y="363.6" width="7" height="4.8" fill="#6a6a6a"/>
<!-- zoom -->
<circle cx="13.4" cy="381.4" r="4.3" fill="none" stroke="#d0d0d0" stroke-width="1.2"/>
<path d="M16.6,384.8 L21.4,389.4" stroke="#d0d0d0" stroke-width="1.6" stroke-linecap="round"/>
<use href="#corner" x="23.4" y="388"/>
<!-- default fill/stroke -->
<rect x="6.8" y="400.4" width="6" height="6" fill="none" stroke="#d8d8d8" stroke-width="1"/>
<rect x="4.2" y="397.8" width="6.2" height="6.2" fill="#111" stroke="#e8e8e8" stroke-width="1"/>
<!-- swap -->
<path d="M20.4,399.2 C23.4,399 25.6,401.2 25.4,404.4" fill="none" stroke="#d0d0d0" stroke-width="1.2"/>
<path d="M19.4,399.2 L22,397.2 L22,401.2 Z M25.4,406.2 L23.4,403.6 L27.4,403.6 Z" fill="#d0d0d0"/>
<!-- fill / stroke -->
<rect x="4.6" y="412.2" width="14" height="14" fill="#000" stroke="#f2f2f2" stroke-width="1.3"/>
<rect x="11.6" y="419" width="15.4" height="15.4" fill="#323232"/>
<rect x="12.2" y="419.6" width="14.4" height="14.4" fill="#fff"/>
<rect x="16.4" y="423.8" width="6" height="6" fill="#2a2a2a"/>
<path d="M12.6,433.6 L26.2,420" stroke="#e3262b" stroke-width="1.7"/>
<!-- mode row -->
<rect x="4.8" y="440" width="7" height="6.6" fill="#fff"/><rect x="6.8" y="441.6" width="3" height="3.4" fill="#222"/>
<rect x="12.4" y="440" width="6.6" height="6.6" fill="url(#gradmini)"/>
<rect x="19.8" y="440" width="7" height="6.6" fill="#fff"/><path d="M20.2,446.4 L26.4,440.2" stroke="#e3262b" stroke-width="1.4"/>
<!-- draw mode -->
<circle cx="14.2" cy="456.6" r="3" fill="none" stroke="#d0d0d0" stroke-width="0.9"/>
<rect x="14.4" y="456.6" width="5.2" height="4.8" fill="#8a8a8a" stroke="#d0d0d0" stroke-width="0.8"/>
<!-- screen mode -->
<rect x="12.4" y="471.2" width="10.6" height="7.4" fill="#6a6a6a" stroke="#d0d0d0" stroke-width="1"/>
<rect x="8.6" y="474.8" width="10.6" height="7.4" fill="#7a7a7a" stroke="#d0d0d0" stroke-width="1"/>
<!-- dots -->
<circle cx="11.2" cy="502" r="1.35" fill="#dcdcdc"/><circle cx="15.6" cy="502" r="1.35" fill="#dcdcdc"/><circle cx="20" cy="502" r="1.35" fill="#dcdcdc"/>
</svg>

<svg id="docksvg" width="80" height="490" viewBox="911 68 80 490" style="left:911px;top:68px;">
<defs><linearGradient id="dg1" x1="0" y1="0" x2="1" y2="0"><stop offset="0" stop-color="#2a2a2a"/><stop offset="1" stop-color="#e0e0e0"/></linearGradient>
<radialGradient id="dg2" cx="0" cy="1" r="1"><stop offset="0" stop-color="#f0f0f0"/><stop offset="1" stop-color="#3a3a3a"/></radialGradient></defs>
<!-- scrollbar -->
<rect x="916" y="93" width="12.4" height="453" fill="#262626"/>
<rect x="928.4" y="70" width="2.6" height="487" fill="#222"/>
<path d="M919.8,101 l2.8,-2.8 l2.8,2.8" fill="none" stroke="#8a8a8a" stroke-width="1"/>
<path d="M919.8,536.4 l2.8,2.8 l2.8,-2.8" fill="none" stroke="#8a8a8a" stroke-width="1"/>
<rect x="917.2" y="308" width="10.6" height="19.8" rx="5.3" fill="#373737" stroke="#3e3e3e" stroke-width="0.6"/>
<rect id="corner-sq" x="916" y="545.4" width="12.4" height="12" fill="#2e2e2e"/>
<!-- dock header -->
<rect x="931" y="70" width="60" height="10" fill="#232323"/>
<path d="M952,73.2 l-2,1.9 l2,1.9 M955.2,73.2 l-2,1.9 l2,1.9 M983,73.2 l-2,1.9 l2,1.9 M986.2,73.2 l-2,1.9 l2,1.9" fill="none" stroke="#bdbdbd" stroke-width="0.9"/>
<!-- columns -->
<rect x="931" y="80" width="28" height="477" fill="#2e2e2e"/>
<rect x="959" y="70" width="2.8" height="487" fill="#232323"/>
<rect x="961.8" y="80" width="29.2" height="477" fill="#2c2c2c"/>
<g fill="#323232">
<rect x="931" y="80" width="28" height="51.6"/><rect x="931" y="133.6" width="28" height="74.6"/><rect x="931" y="210.2" width="28" height="72.8"/>
<rect x="931" y="285" width="28" height="51.2"/><rect x="931" y="338.2" width="28" height="72.8"/><rect x="931" y="413" width="28" height="29.6"/>
<rect x="961.8" y="80" width="29.2" height="51.6"/>
</g>
<g fill="#222"><rect x="931" y="131.6" width="28" height="2"/><rect x="931" y="208.2" width="28" height="2"/><rect x="931" y="283" width="28" height="2"/><rect x="931" y="336.2" width="28" height="2"/><rect x="931" y="411" width="28" height="2"/><rect x="931" y="442.6" width="28" height="2"/><rect x="961.8" y="131.6" width="29.2" height="2"/></g>
<g fill="#292929"><rect x="937.2" y="82.6" width="15.6" height="2.4" rx="1"/><rect x="937.2" y="136.2" width="15.6" height="2.4" rx="1"/><rect x="937.2" y="212.8" width="15.6" height="2.4" rx="1"/><rect x="937.2" y="287.6" width="15.6" height="2.4" rx="1"/><rect x="937.2" y="340.8" width="15.6" height="2.4" rx="1"/><rect x="937.2" y="415.6" width="15.6" height="2.4" rx="1"/><rect x="968.6" y="82.6" width="15.6" height="2.4" rx="1"/></g>
<!-- palette -->
<path d="M945.8,91.2 C950.6,91.2 953.8,93.8 953.8,97 C953.8,99.4 951.8,100.2 950,100 C948.6,99.8 947.8,100.6 948,101.6 C948.2,102.8 947,103.4 945.4,103.4 C941.2,103.4 937.8,100.8 937.8,97.4 C937.8,94 941.2,91.2 945.8,91.2 Z" fill="#d6d6d6"/>
<g fill="#323232"><circle cx="941.4" cy="97.6" r="1.2"/><circle cx="943.6" cy="94.6" r="1.2"/><circle cx="947.4" cy="93.8" r="1.2"/><circle cx="950.8" cy="95.8" r="1.2"/><circle cx="943.2" cy="100.6" r="1.1"/></g>
<!-- color guide -->
<path d="M939.6,112.4 C947,112.6 952.4,118 952.6,125.4 L939.6,125.4 Z" fill="url(#dg2)" stroke="#d8d8d8" stroke-width="1.1"/>
<!-- 3d -->
<g fill="none" stroke="#d6d6d6" stroke-width="1.1" stroke-linejoin="round"><path d="M974.4,90.6 L979,92.8 L979,98 L974.4,100.4 L969.8,98 L969.8,92.8 Z"/><path d="M969.8,92.8 L974.4,95.2 L979,92.8 M974.4,95.2 V100.4"/></g>
<g fill="#d6d6d6"><rect x="981" y="91" width="3.2" height="3.2"/><rect x="981" y="96" width="3.2" height="3.2"/><rect x="969.6" y="101.8" width="14.6" height="3.2"/></g>
<path d="M980.6,102.6 l1.4,1.6 l1.4,-1.6z" fill="#323232"/>
<!-- libraries -->
<rect x="971" y="113.4" width="12.4" height="12.4" rx="1.6" fill="none" stroke="#d6d6d6" stroke-width="1.2"/>
<path d="M973.6,116 H981 V123.4 H973.6 Z" fill="none" stroke="#d6d6d6" stroke-width="1"/>
<path d="M976.8,113.6 v4.8 l1.5,-1.2 l1.5,1.2 v-4.8z" fill="#d6d6d6"/>
<!-- swatches -->
<rect x="938.6" y="146.8" width="14" height="9.2" rx="0.8" fill="#d2d2d2"/>
<g fill="#555"><rect x="940" y="148" width="3.2" height="2.8"/><rect x="944" y="148" width="3.2" height="2.8"/><rect x="948" y="148" width="3.2" height="2.8" fill="#8a8a8a"/><rect x="940" y="151.8" width="3.2" height="2.8" fill="#8a8a8a"/><rect x="944" y="151.8" width="3.2" height="2.8"/><rect x="948" y="151.8" width="3.2" height="2.8"/></g>
<!-- brushes -->
<path d="M941.4,173.2 H950 L949.4,179.6 H942 Z" fill="#d6d6d6"/>
<path d="M943.4,173 L941.6,167.6 M945.8,173 L945.6,165.6 M948,173 L950.6,167.4" stroke="#d6d6d6" stroke-width="1.2" fill="none"/>
<path d="M940.6,166 l1.8,-1 l0.6,2.6z M944.6,164.2 h2.2 l-0.4,2.4 h-1.4z M950,165.4 l2,0.8 l-1.6,2.2z" fill="#d6d6d6"/>
<!-- symbols (club) -->
<circle cx="945.6" cy="190.4" r="3.3" fill="#d6d6d6"/><circle cx="942" cy="195.6" r="3.3" fill="#d6d6d6"/><circle cx="949.2" cy="195.6" r="3.3" fill="#d6d6d6"/>
<path d="M945.6,194 C945.6,198 944.6,200 942.8,201.4 H948.4 C946.6,200 945.6,198 945.6,194Z" fill="#d6d6d6"/>
<!-- stroke -->
<g fill="#d6d6d6"><rect x="938.6" y="219.4" width="14" height="1.4"/><rect x="938.6" y="223.6" width="14" height="2.2"/><rect x="938.6" y="228.4" width="14" height="3"/></g>
<!-- gradient -->
<rect x="939" y="242.4" width="13.2" height="10.4" fill="url(#dg1)" stroke="#d6d6d6" stroke-width="1.1"/>
<!-- transparency -->
<circle cx="943.6" cy="268.6" r="5.2" fill="#c4c4c4"/><circle cx="947.6" cy="272.4" r="5.2" fill="#6e6e6e" stroke="#c4c4c4" stroke-width="0.9"/>
<!-- appearance -->
<circle cx="945.4" cy="301.4" r="4.6" fill="#cfcfcf"/><circle cx="945.4" cy="301.4" r="6.4" fill="none" stroke="#d6d6d6" stroke-width="1" stroke-dasharray="1.3 1.1"/>
<!-- graphic styles -->
<rect x="942.6" y="316.6" width="9.6" height="9.6" rx="1" fill="none" stroke="#d6d6d6" stroke-width="1.1"/>
<rect x="939.4" y="323" width="5.8" height="5.8" fill="#323232" stroke="#d6d6d6" stroke-width="1"/><rect x="942" y="325.6" width="3" height="3" fill="#d6d6d6"/>
<!-- layers -->
<path d="M945.4,348.4 L952.4,352.6 L945.4,356.8 L938.4,352.6 Z" fill="#dedede"/>
<path d="M938.4,356.8 L941,355.2 L945.4,357.9 L949.8,355.2 L952.4,356.8 L945.4,361 Z" fill="#dedede"/>
<!-- asset export -->
<path d="M945.6,370.6 H939.6 V382.2 H951.2 V376.4" fill="none" stroke="#dedede" stroke-width="1.3"/>
<path d="M944.6,377.2 L951.6,370.2 M947.4,369.8 H952 V374.4" fill="none" stroke="#dedede" stroke-width="1.3"/>
<!-- artboards -->
<rect x="938.8" y="391.6" width="9" height="8" fill="none" stroke="#d6d6d6" stroke-width="1.1"/>
<rect x="942.4" y="395.8" width="9.8" height="8" fill="#323232" stroke="#d6d6d6" stroke-width="1.1"/>
<!-- pathfinder -->
<rect x="940" y="424" width="7" height="7" fill="#c8c8c8"/><rect x="944" y="428" width="7.4" height="7.4" fill="#dcdcdc"/><rect x="944" y="428" width="3" height="3" fill="#8c8c8c"/>
</svg>

<svg id="statussvg" width="991" height="12" viewBox="0 545 991 12" style="left:0;top:545px;">
<rect x="33" y="545.4" width="883" height="11.6" fill="#2a2a2a"/>
<rect x="35.4" y="546.4" width="38" height="10.6" fill="#232323"/>
<path d="M77.8,551.5 l2.8,2.7 l2.8,-2.7" fill="none" stroke="#cfcfcf" stroke-width="1.1"/>
<g fill="#5e5e5e"><rect x="95.6" y="549" width="1.2" height="6"/><path d="M101.2,549 v6 l-3.8,-3z"/><path d="M113.6,549 v6 l-3.8,-3z"/>
<path d="M174.2,549 v6 l3.8,-3z"/><path d="M184.6,549 v6 l3.8,-3z"/><rect x="189" y="549" width="1.2" height="6"/></g>
<rect x="121" y="546.4" width="30.6" height="10.6" fill="#232323"/>
<path d="M155.2,551.5 l2.8,2.7 l2.8,-2.7" fill="none" stroke="#cfcfcf" stroke-width="1.1"/>
<path d="M358.2,548.6 v6.4 l4,-3.2z" fill="#e6e6e6"/>
<path d="M375.8,549 l-2.8,2.9 l2.8,2.9" fill="none" stroke="#6a6a6a" stroke-width="1"/>
<rect x="368" y="546" width="548" height="11" fill="#282828" opacity="0"/>
<rect x="633" y="547.4" width="19.8" height="9" rx="4.5" fill="#373737"/>
<path d="M907.6,549 l2.8,2.9 l-2.8,2.9" fill="none" stroke="#8a8a8a" stroke-width="1"/>
</svg>


<div id="texts">
<span class="t" style="left:42.4px;top:14.11px;font-size:11.8px;font-weight:700;color:#ffffff;transform:translateY(-100%) scaleX(0.9594);">Illustrator</span>
<span class="t" style="left:109.7px;top:14.11px;font-size:11.8px;font-weight:400;color:#ffffff;transform:translateY(-100%) scaleX(0.9475);-webkit-text-stroke:0.3px #fff;">Arquivo</span>
<span class="t" style="left:162px;top:14.11px;font-size:11.8px;font-weight:400;color:#ffffff;transform:translateY(-100%) scaleX(0.9245);-webkit-text-stroke:0.3px #fff;">Editar</span>
<span class="t" style="left:205.6px;top:14.11px;font-size:11.8px;font-weight:400;color:#ffffff;transform:translateY(-100%) scaleX(0.9435);-webkit-text-stroke:0.3px #fff;">Objeto</span>
<span class="t" style="left:253.6px;top:14.11px;font-size:11.8px;font-weight:400;color:#ffffff;transform:translateY(-100%) scaleX(0.9682);-webkit-text-stroke:0.3px #fff;">Tipo</span>
<span class="t" style="left:290px;top:14.11px;font-size:11.8px;font-weight:400;color:#ffffff;transform:translateY(-100%) scaleX(0.9327);-webkit-text-stroke:0.3px #fff;">Selecionar</span>
<span class="t" style="left:356.6px;top:14.11px;font-size:11.8px;font-weight:400;color:#ffffff;transform:translateY(-100%) scaleX(0.9313);-webkit-text-stroke:0.3px #fff;">Efeito</span>
<span class="t" style="left:399px;top:14.11px;font-size:11.8px;font-weight:400;color:#ffffff;transform:translateY(-100%) scaleX(0.9017);-webkit-text-stroke:0.3px #fff;">Exibir</span>
<span class="t" style="left:440.7px;top:14.11px;font-size:11.8px;font-weight:400;color:#ffffff;transform:translateY(-100%) scaleX(0.9320);-webkit-text-stroke:0.3px #fff;">Janela</span>
<span class="t" style="left:487.4px;top:14.11px;font-size:11.8px;font-weight:400;color:#ffffff;transform:translateY(-100%) scaleX(0.9308);-webkit-text-stroke:0.3px #fff;">Ajuda</span>
<span class="t" style="left:829.9px;top:13.12px;font-size:11.2px;font-weight:400;color:#ffffff;transform:translateY(-100%) scaleX(0.8279);-webkit-text-stroke:0.3px #fff;">100%</span>
<span class="t" style="left:418.1px;top:36.08px;font-size:10.3px;font-weight:400;color:#a6a6a6;transform:translateY(-100%) scaleX(1.0104);-webkit-text-stroke:0.22px #a6a6a6;">Adobe Illustrator 2020</span>
<span class="t" style="left:714.5px;top:35.93px;font-size:10.6px;font-weight:700;color:#d2d2d2;transform:translateY(-100%) scaleX(0.9112);-webkit-text-stroke:0.22px #d2d2d2;">Clássicos essenciais</span>
<span class="t" style="left:862.5px;top:35.90px;font-size:9.8px;font-weight:400;color:#8e8e8e;transform:translateY(-100%) scaleX(0.9258);-webkit-text-stroke:0.22px #8e8e8e;">Pesquisar Adobe Stock</span>
<span class="t" style="left:11.6px;top:61.83px;font-size:9.3px;font-weight:400;color:#c4c4c4;transform:translateY(-100%) scaleX(0.8484);-webkit-text-stroke:0.22px #c4c4c4;">Sem seleção</span>
<span class="t" style="left:173.6px;top:61.83px;font-size:9.3px;font-weight:700;color:#d8d8d8;transform:translateY(-100%) scaleX(0.8465);text-decoration:underline dotted;text-underline-offset:1.6px;text-decoration-thickness:1px;-webkit-text-stroke:0.22px #d8d8d8;">Traçado:</span>
<span class="t" style="left:390.5px;top:61.83px;font-size:9.3px;font-weight:400;color:#111;transform:translateY(-100%) scaleX(0.9087);-webkit-text-stroke:0.22px #111;">3 pontos –...</span>
<span class="t" style="left:458.3px;top:61.83px;font-size:9.3px;font-weight:700;color:#d8d8d8;transform:translateY(-100%) scaleX(0.8215);text-decoration:underline dotted;text-underline-offset:1.6px;text-decoration-thickness:1px;-webkit-text-stroke:0.22px #d8d8d8;">Opacidade:</span>
<span class="t" style="left:508.2px;top:61.83px;font-size:9.3px;font-weight:400;color:#e0e0e0;transform:translateY(-100%) scaleX(0.8284);-webkit-text-stroke:0.22px #e0e0e0;">100%</span>
<span class="t" style="left:569.3px;top:61.83px;font-size:9.3px;font-weight:400;color:#b4b4b4;transform:translateY(-100%) scaleX(0.8568);-webkit-text-stroke:0.22px #b4b4b4;">Estilo:</span>
<span class="t" style="left:643.2px;top:61.93px;font-size:9.3px;font-weight:400;color:#e8e8e8;transform:translateY(-100%) scaleX(0.9151);-webkit-text-stroke:0.22px #e8e8e8;">Configuração de documento</span>
<span class="t" style="left:769.6px;top:61.93px;font-size:9.3px;font-weight:400;color:#e8e8e8;transform:translateY(-100%) scaleX(0.8658);-webkit-text-stroke:0.22px #e8e8e8;">Preferências</span>
<span class="t" style="left:51px;top:86.40px;font-size:9.1px;font-weight:700;color:#ffffff;transform:translateY(-100%) scaleX(0.8995);-webkit-text-stroke:0.22px #ffffff;">Curso02_09.ai* @ 46,94% (RGB/Exibição GPU )</span>
<span class="t" style="left:71.4px;top:107.83px;font-size:9.3px;font-weight:400;color:#aaaaaa;transform:translateY(-100%) scaleX(0.8956);text-decoration:underline;text-underline-offset:1.6px;text-decoration-thickness:1px;-webkit-text-stroke:0.22px #aaaaaa;">Objetos</span>
<span class="t" style="left:122.5px;top:107.83px;font-size:9.3px;font-weight:400;color:#aaaaaa;transform:translateY(-100%) scaleX(0.9226);text-decoration:underline;text-underline-offset:1.6px;text-decoration-thickness:1px;-webkit-text-stroke:0.22px #aaaaaa;">&lt;Grupo de clipes&gt;</span>
<span class="t" style="left:214px;top:107.83px;font-size:9.3px;font-weight:400;color:#eeeeee;transform:translateY(-100%) scaleX(0.9234);-webkit-text-stroke:0.22px #eeeeee;">&lt;Caminho composto&gt;</span>
<span class="t" style="left:37.9px;top:557.73px;font-size:9.3px;font-weight:400;color:#dadada;transform:translateY(-100%) scaleX(0.8654);-webkit-text-stroke:0.22px #dadada;">46,94%</span>
<span class="t" style="left:123.8px;top:557.73px;font-size:9.3px;font-weight:400;color:#dadada;transform:translateY(-100%) scaleX(0.7541);-webkit-text-stroke:0.22px #dadada;">1</span>
<span class="t" style="left:261.5px;top:557.73px;font-size:9.3px;font-weight:400;color:#cacaca;transform:translateY(-100%) scaleX(0.8272);-webkit-text-stroke:0.22px #cacaca;">Seleção</span>
</div>
</body></html>
